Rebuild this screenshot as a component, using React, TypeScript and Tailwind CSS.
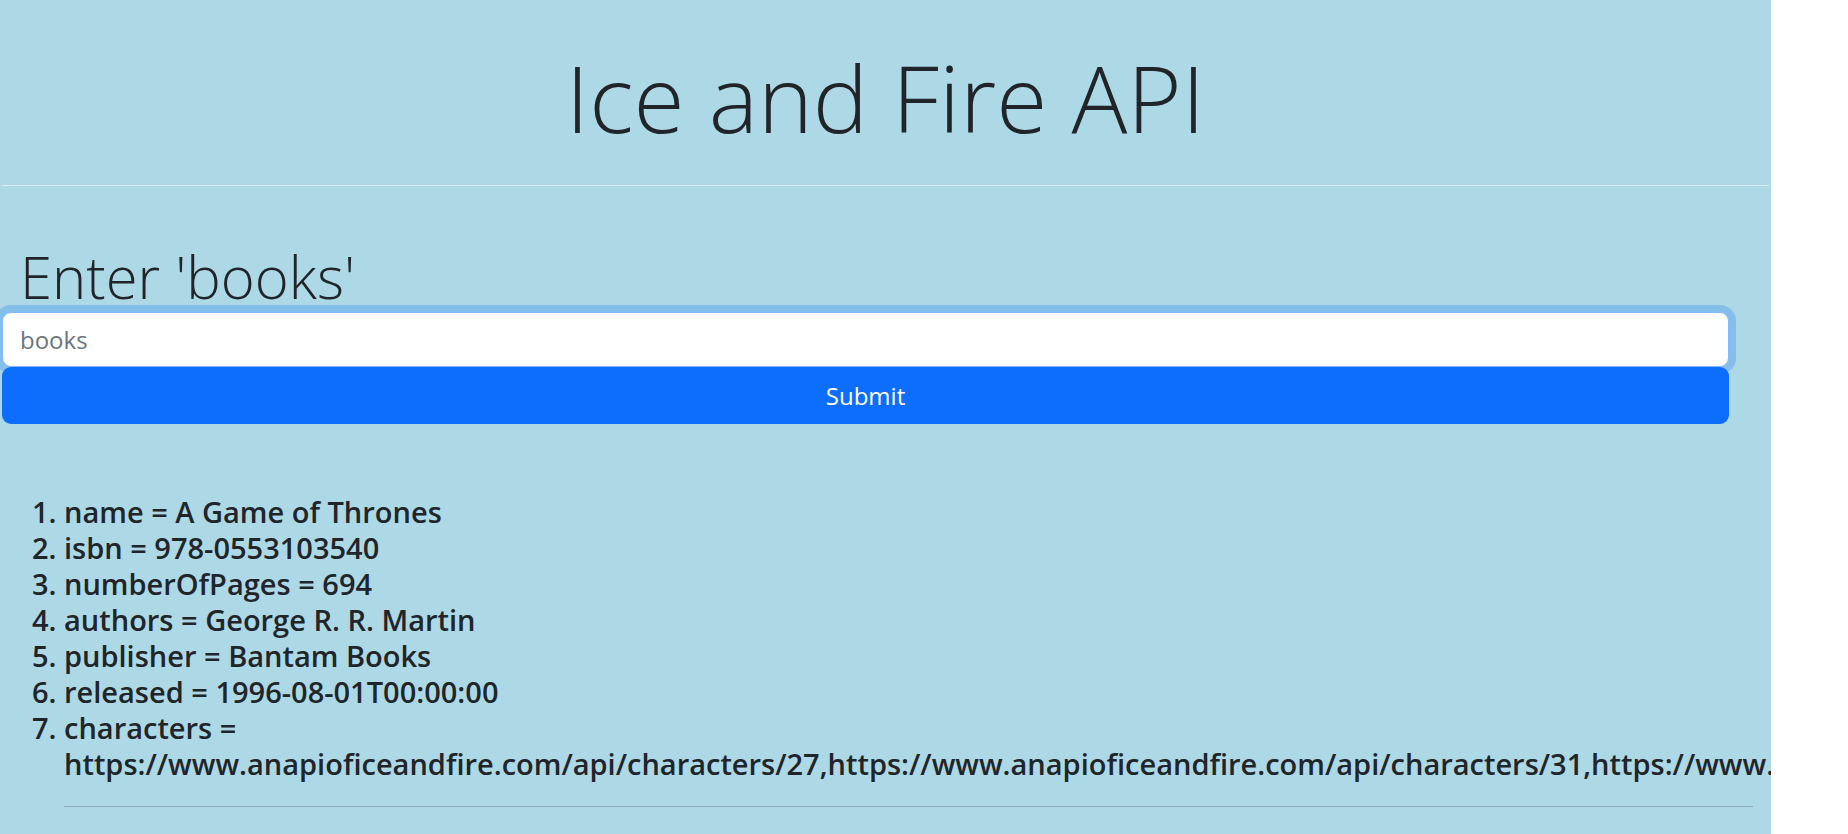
const book = [
  { key: 'name', value: 'A Game of Thrones' },
  { key: 'isbn', value: '978-0553103540' },
  { key: 'numberOfPages', value: '694' },
  { key: 'authors', value: 'George R. R. Martin' },
  { key: 'publisher', value: 'Bantam Books' },
  { key: 'released', value: '1996-08-01T00:00:00' },
  {
    key: 'characters',
    value: [27, 31, 38, 39, 40, 41, 42, 57, 58, 61]
      .map(id => `https://www.anapioficeandfire.com/api/characters/${id}`)
      .join(','),
  },
]

export default function App() {
  return (
    <div className="min-h-screen bg-white">
      <div className="w-[1771px] min-h-[834px] overflow-hidden bg-[#add8e6] text-[#212529] font-['Open_Sans','Noto_Sans',sans-serif]">
        <h1 className="pt-[41px] text-center text-[93px] font-light leading-[112px]">Ice and Fire API</h1>
        <hr className="mx-[2px] mt-[32px] border-0 border-t border-[#dbedf2]" />

        <h2 className="mt-[56px] pl-[20px] text-[58px] font-light leading-[70px]">Enter 'books'</h2>
        <form className="ml-[2px] w-[1727px]" onSubmit={e => e.preventDefault()}>
          <input
            type="text"
            placeholder="books"
            className="block h-[55px] w-full rounded-[9px] border-[1.5px] border-[#86b7fe] bg-white px-[17px] text-[24px] outline-none shadow-[0_0_0_7px_rgba(13,110,253,0.25)] placeholder:text-[#6c757d]"
          />
          <button
            type="submit"
            className="relative block h-[57px] w-full rounded-[9px] bg-[#0d6efd] text-[24px] text-white"
          >
            Submit
          </button>
        </form>

        <ol className="ml-[16px] mr-[18px] mt-[70px] list-decimal pl-[48px]">
          {book.map(item => (
            <li key={item.key} className="text-[29px] font-semibold leading-[36px]">
              {item.key} = {item.value}
            </li>
          ))}
          <hr className="mt-[24px] border-0 border-t border-[#8aabb6]" />
        </ol>
      </div>
    </div>
  )
}
